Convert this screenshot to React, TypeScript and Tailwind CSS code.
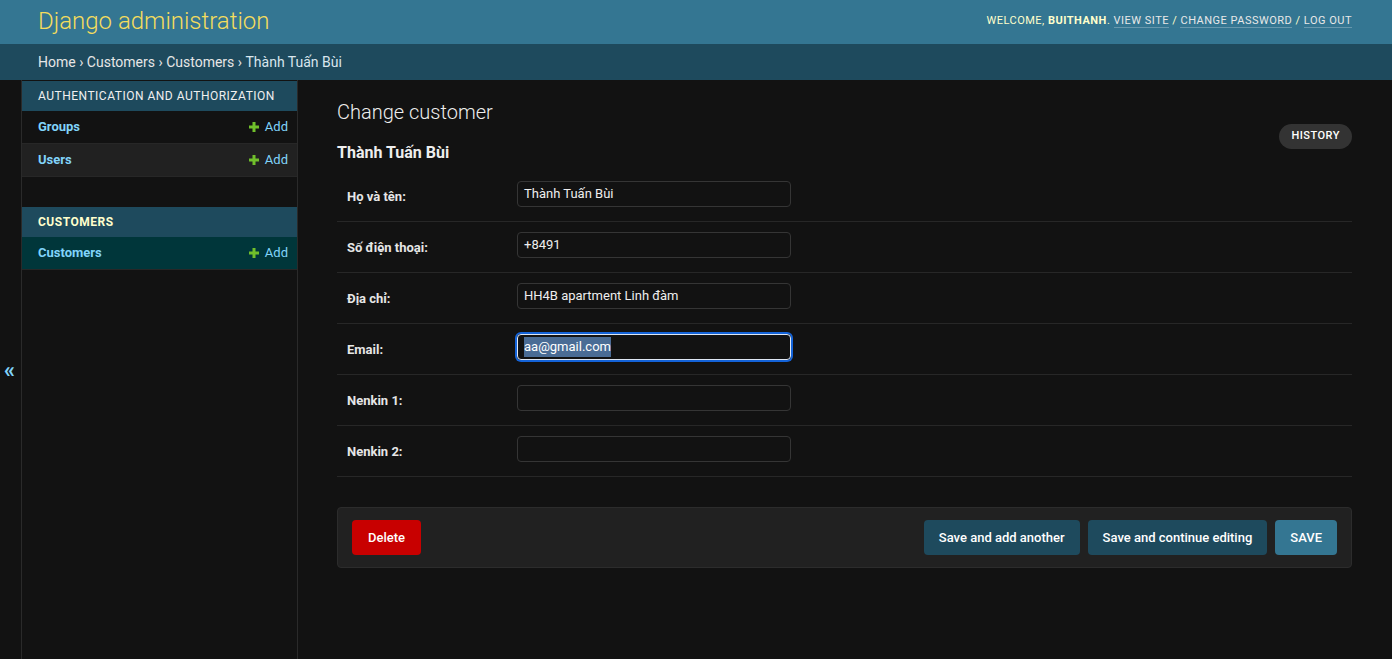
import React from "react";

const PlusIcon = () => (
  <svg width="10" height="10" viewBox="0 0 10 10" className="shrink-0">
    <path d="M3.5 0h3v3.5H10v3H6.5V10h-3V6.5H0v-3h3.5z" fill="#70bf2b" />
  </svg>
);

const NavRow = ({ name, bg }: { name: string; bg: string }) => (
  <div className={`flex h-[33px] items-center justify-between border-b border-[#272727] pl-4 pr-[9px] ${bg}`}>
    <span className="text-[13px] font-bold text-[#81d4fa]">{name}</span>
    <span className="flex items-center gap-[6px] text-[13px] text-[#81d4fa]">
      <PlusIcon />
      Add
    </span>
  </div>
);

const FormRow = ({ label, value, focused }: { label: string; value: string; focused?: boolean }) => (
  <div className="flex h-[51px] items-start border-b border-[#272727] pl-[10px]">
    <label className="mt-[18px] w-[170px] text-[13px] font-bold leading-4 text-[#e6e6e6]">{label}</label>
    <div
      className={`mt-[10px] flex h-[26px] w-[274px] items-center rounded-[4px] border px-[6px] text-[13px] text-[#eeeeee] ${
        focused ? "border-[#dfe7f3] ring-2 ring-[#1463d8]" : "border-[#353535]"
      }`}
    >
      {focused ? <span className="bg-[#4a6c95] text-white">{value}</span> : value}
    </div>
  </div>
);

export default function App() {
  return (
    <div className="flex min-h-[659px] flex-col bg-[#121212] font-['Roboto',sans-serif]">
      <header className="flex h-[44px] items-center justify-between bg-[#347692] pb-[2px] pl-[38px] pr-[40px]">
        <div className="text-[24px] font-light text-[#f5dd5d]">Django administration</div>
        <div className="text-[11px] uppercase tracking-[0.5px] text-[#ffffcc]">
          Welcome, <strong className="font-bold">buithanh</strong>.{" "}
          <a className="border-b border-white/25 text-[#e8e8e8]">View site</a> /{" "}
          <a className="border-b border-white/25 text-[#e8e8e8]">Change password</a> /{" "}
          <a className="border-b border-white/25 text-[#e8e8e8]">Log out</a>
        </div>
      </header>
      <div className="flex h-[36px] items-center whitespace-pre bg-[#1e4a5d] px-[38px] text-[14px] text-[#e6e6e6]">
        <span>Home</span>
        <span> › </span>
        <span>Customers</span>
        <span> › </span>
        <span>Customers</span>
        <span> › </span>
        <span className="text-[#d9e6ee]">Thành Tuấn Bùi</span>
      </div>
      <div className="flex flex-1">
        <div className="flex w-[22px] items-center justify-center border-r border-[#2a2a2a] pr-[2px]">
          <span className="text-[22px] font-bold leading-none text-[#81d4fa]">«</span>
        </div>
        <nav className="w-[276px] border-r border-[#2a2a2a] pt-px">
          <div className="mb-[30px]">
            <div className="flex h-[30px] items-center bg-[#1e4a5d] px-4 text-[12px] uppercase tracking-[0.5px] text-[#f0f0f0]">
              Authentication and Authorization
            </div>
            <NavRow name="Groups" bg="" />
            <NavRow name="Users" bg="bg-[#212121]" />
          </div>
          <div>
            <div className="flex h-[30px] items-center bg-[#1e4a5d] px-4 text-[12px] font-bold uppercase tracking-[0.5px] text-[#ffffcc]">
              Customers
            </div>
            <NavRow name="Customers" bg="bg-[#00363a]" />
          </div>
        </nav>
        <main className="flex-1 pl-[39px] pr-[40px] pt-[20px]">
          <div className="flex items-start justify-between">
            <div>
              <h1 className="text-[20px] font-light leading-6 text-[#eeeeee]">Change customer</h1>
              <h2 className="mt-[19px] text-[16px] font-bold leading-5 text-[#eeeeee]">Thành Tuấn Bùi</h2>
            </div>
            <a className="mt-[24px] flex h-[25px] items-center rounded-full bg-[#333333] px-[12px] text-[11px] font-medium uppercase tracking-[0.5px] text-white">
              History
            </a>
          </div>
          <div className="mt-[8px]">
            <FormRow label="Họ và tên:" value="Thành Tuấn Bùi" />
            <FormRow label="Số điện thoại:" value="+8491" />
            <FormRow label="Địa chỉ:" value="HH4B apartment Linh đàm" />
            <FormRow label="Email:" value="aa@gmail.com" focused />
            <FormRow label="Nenkin 1:" value="" />
            <FormRow label="Nenkin 2:" value="" />
          </div>
          <div className="mt-[30px] flex items-center justify-between rounded-[4px] border border-[#2c2c2c] bg-[#212121] px-[14px] py-[12px]">
            <button className="h-[35px] rounded-[4px] bg-[#c80000] px-[16px] text-[13px] font-medium text-white">Delete</button>
            <div className="flex gap-[8px]">
              <button className="h-[35px] rounded-[4px] bg-[#1e4a5d] px-[15px] text-[13px] font-medium text-white">Save and add another</button>
              <button className="h-[35px] rounded-[4px] bg-[#1e4a5d] px-[15px] text-[13px] font-medium text-white">Save and continue editing</button>
              <button className="h-[35px] rounded-[4px] bg-[#347692] px-[15px] text-[13px] font-medium text-white">SAVE</button>
            </div>
          </div>
        </main>
      </div>
    </div>
  );
}
